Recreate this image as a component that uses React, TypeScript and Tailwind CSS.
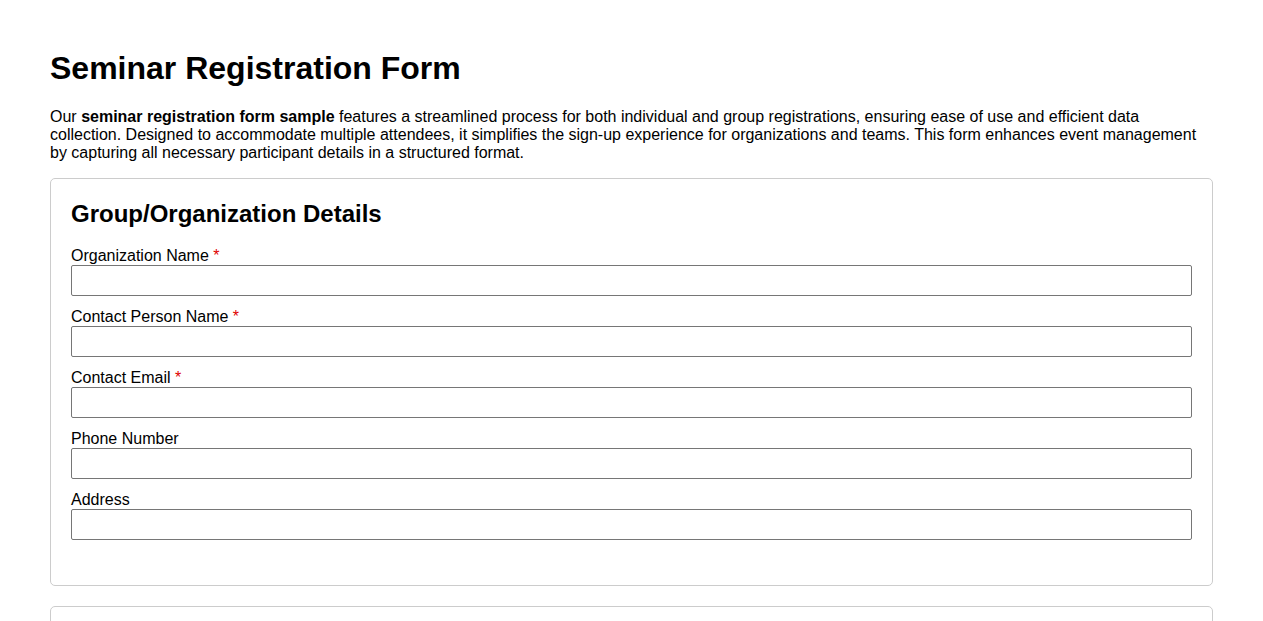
import React from 'react';

const fields = [
  { label: 'Organization Name', required: true, type: 'text' },
  { label: 'Contact Person Name', required: true, type: 'text' },
  { label: 'Contact Email', required: true, type: 'email' },
  { label: 'Phone Number', required: false, type: 'tel' },
  { label: 'Address', required: false, type: 'text' },
];

const App: React.FC = () => {
  return (
    <div className="min-h-screen bg-white px-[50px] pt-[29px] text-black font-['Liberation_Sans',Arial,sans-serif]">
      <h1 className="text-[32px] font-bold leading-[37px] mt-[21px] mb-[21px]">Seminar Registration Form</h1>
      <p className="text-base leading-[18px] mb-[16px]">
        Our <strong>seminar registration form sample</strong> features a streamlined process for both individual and group
        registrations, ensuring ease of use and efficient data collection. Designed to accommodate multiple attendees, it
        simplifies the sign-up experience for organizations and teams. This form enhances event management by capturing all
        necessary participant details in a structured format.
      </p>

      <div className="border border-[#ccc] rounded-[5px] px-5 pt-[21px] pb-[45px] mb-5">
        <h2 className="text-2xl font-bold leading-[28px] mb-[18px]">Group/Organization Details</h2>
        {fields.map((f) => (
          <div key={f.label} className="mb-[11px] last:mb-0">
            <label className="block text-base leading-[19px] h-[19px]">
              {f.label}
              {f.required && <span className="text-[#e00000]"> *</span>}
            </label>
            <input
              type={f.type}
              className="block w-full h-[31px] border border-[#767676] rounded-[2px] px-2 text-base outline-none"
            />
          </div>
        ))}
      </div>

      <div className="border border-[#ccc] rounded-[5px] p-5 h-[200px]" />
    </div>
  );
};

export default App;
